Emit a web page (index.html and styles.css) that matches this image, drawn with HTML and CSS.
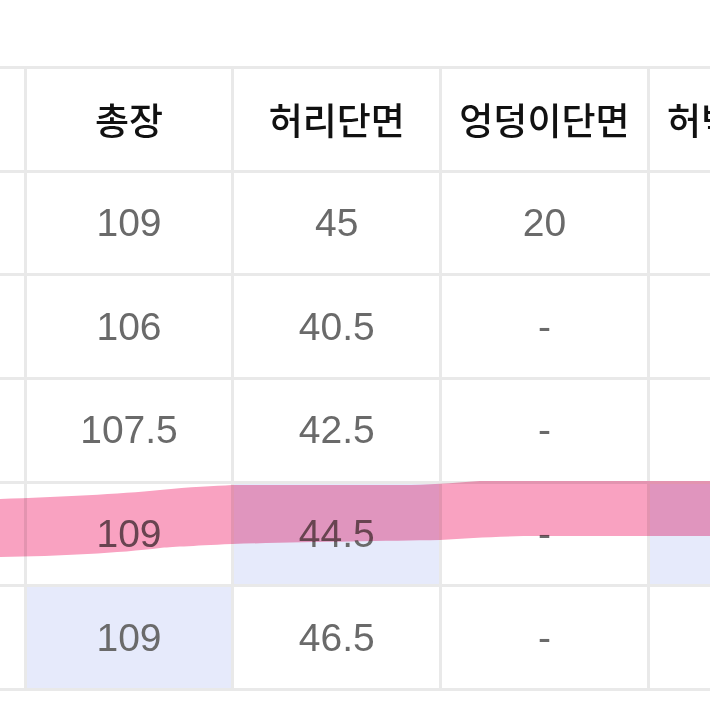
FILE: index.html
```html
<!DOCTYPE html>
<html lang="ko">
<head>
<meta charset="utf-8">
<title>사이즈표</title>
<link rel="stylesheet" href="styles.css">
</head>
<body>
<div class="frame">
  <div class="sheet">
    <div class="cell"></div>
    <div class="cell head">총장</div>
    <div class="cell head">허리단면</div>
    <div class="cell head">엉덩이단면</div>
    <div class="cell head">허벅지단면</div>

    <div class="cell"></div>
    <div class="cell num">109</div>
    <div class="cell num">45</div>
    <div class="cell num">20</div>
    <div class="cell"></div>

    <div class="cell"></div>
    <div class="cell num">106</div>
    <div class="cell num">40.5</div>
    <div class="cell num">-</div>
    <div class="cell"></div>

    <div class="cell"></div>
    <div class="cell num">107.5</div>
    <div class="cell num">42.5</div>
    <div class="cell num">-</div>
    <div class="cell"></div>

    <div class="cell"></div>
    <div class="cell num">109</div>
    <div class="cell num mark">44.5</div>
    <div class="cell num">-</div>
    <div class="cell mark"></div>

    <div class="cell"></div>
    <div class="cell num mark">109</div>
    <div class="cell num">46.5</div>
    <div class="cell num">-</div>
    <div class="cell"></div>
  </div>
  <svg class="highlight" width="710" height="710" viewBox="0 0 710 710" aria-hidden="true">
    <path d="M0,499 C60,497 120,494 160,490 C190,487 215,486 232,485 L400,485 C430,485 450,483 480,481 L710,481 L710,536 L540,536 C500,536 470,538 440,540 C380,541 300,542 232,544 C190,546 170,547 160,548 C120,553 60,556 0,557 Z" fill="#f9a2c1"/>
  </svg>
</div>
</body>
</html>
```
FILE: styles.css
```css
html, body {
  margin: 0;
  padding: 0;
  background: #ffffff;
}

body {
  width: 710px;
  height: 710px;
  overflow: hidden;
}

.frame {
  position: relative;
  width: 710px;
  height: 710px;
  overflow: hidden;
  padding-top: 66px;
  box-sizing: border-box;
}

.sheet {
  display: grid;
  grid-template-columns: repeat(5, 204.7px);
  grid-auto-rows: 100.7px;
  gap: 3px;
  padding: 3px 0;
  width: max-content;
  margin-left: -181px;
  background: #e9e9e9;
}

.cell {
  background: #ffffff;
  display: flex;
  align-items: center;
  justify-content: center;
  white-space: nowrap;
}

.head {
  font-family: "Noto Sans CJK KR", "Noto Sans", sans-serif;
  font-size: 37px;
  font-weight: 500;
  color: #111111;
}

.num {
  font-family: "Liberation Sans", Arial, sans-serif;
  font-size: 39px;
  color: #6a6a6a;
}

.mark {
  background: #e6eafb;
}

.highlight {
  position: absolute;
  left: 0;
  top: 0;
  pointer-events: none;
  mix-blend-mode: multiply;
}
```
